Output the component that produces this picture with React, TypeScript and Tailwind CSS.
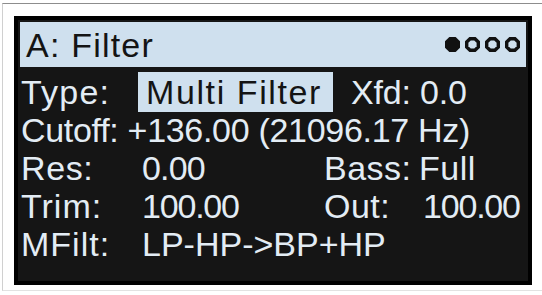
import React from "react";

const Oct = ({ x, filled }: { x: number; filled: boolean }) => {
  const p = (ox: number, r: number) => {
    const a = r * 0.42;
    const c = 7.5;
    return [
      [ox + c - a, c - r],
      [ox + c + a, c - r],
      [ox + c + r, c - a],
      [ox + c + r, c + a],
      [ox + c + a, c + r],
      [ox + c - a, c + r],
      [ox + c - r, c + a],
      [ox + c - r, c - a],
    ]
      .map((q) => q.join(","))
      .join(" ");
  };
  return filled ? (
    <polygon points={p(x, 7.5)} fill="#111" />
  ) : (
    <polygon points={p(x, 5.8)} fill="none" stroke="#111" strokeWidth={3.4} />
  );
};

export default function App() {
  const font = { fontFamily: '"Liberation Sans", Arial, sans-serif' };
  return (
    <div className="w-[542px] h-[295px] bg-white overflow-hidden pt-[3px]" style={font}>
      <div className="ml-[2px] h-[288px] border-t border-t-[#8d8d8d] border-l border-l-[#d0d0d0] border-b border-b-[#e2e2e2] pl-[11px] pt-[12px]">
        <div className="w-[518px] h-[269px] border-[4px] border-black bg-[#151515] p-[2px] text-[34px] leading-[38px] text-[#e3ecf4]">
          <div className="h-[45px] bg-[#cfe0ee] flex items-center justify-between pl-[6px] pr-[6px] text-[#141414]">
            <span className="tracking-[1.2px]">A: Filter</span>
            <svg width="75" height="15" viewBox="0 0 75 15">
              <Oct x={0} filled />
              <Oct x={20} filled={false} />
              <Oct x={40} filled={false} />
              <Oct x={60} filled={false} />
            </svg>
          </div>
          <div className="pl-[1px] mt-[6px] whitespace-nowrap">
            <div className="h-[38px] flex items-center">
              <span className="w-[117px] tracking-[1.2px]">Type:</span>
              <span className="w-[195px] h-[40px] bg-[#cfe0ee] text-[#141414] pl-[8px] tracking-[1.6px] flex items-center">
                Multi Filter
              </span>
              <span className="ml-[18px] tracking-[-0.2px]">Xfd: 0.0</span>
            </div>
            <div className="h-[38px] flex items-center">
              <span className="tracking-[-0.3px]">Cutoff: +136.00 (21096.17 Hz)</span>
            </div>
            <div className="h-[38px] flex items-center">
              <span className="w-[121px] tracking-[0.6px]">Res:</span>
              <span className="w-[182px] tracking-[-0.8px]">0.00</span>
              <span className="w-[95px] tracking-[0.5px]">Bass:</span>
              <span className="tracking-[0.5px]">Full</span>
            </div>
            <div className="h-[38px] flex items-center">
              <span className="w-[121px] tracking-[1px]">Trim:</span>
              <span className="w-[182px] tracking-[-1.2px]">100.00</span>
              <span className="w-[99px] tracking-[0.5px]">Out:</span>
              <span className="tracking-[-1.2px]">100.00</span>
            </div>
            <div className="h-[38px] flex items-center">
              <span className="w-[121px] tracking-[1px]">MFilt:</span>
              <span>LP-HP-&gt;BP+HP</span>
            </div>
          </div>
        </div>
      </div>
    </div>
  );
}
